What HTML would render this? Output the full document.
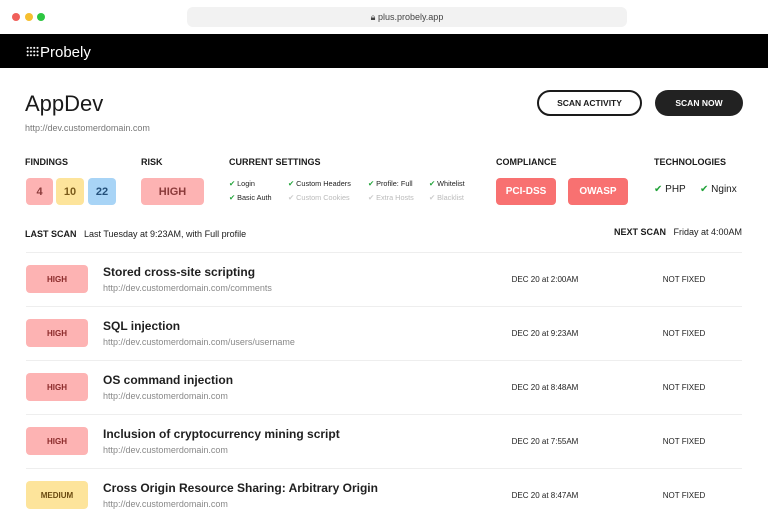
<!DOCTYPE html><html><head><style>
*{margin:0;padding:0;box-sizing:border-box}
body{width:768px;height:522px;overflow:hidden;background:#fff;font-family:"Liberation Sans",sans-serif;color:#1a1a1a;position:relative}
.a{position:absolute}
.dot{width:8px;height:8px;border-radius:50%;top:13px}
.lbl{font-size:9px;font-weight:bold;top:157px}
.bd{border-radius:4px;display:flex;align-items:center;justify-content:center;font-weight:bold}
.set{font-size:7.3px;color:#222;white-space:nowrap}
.set.off{color:#bbb}
.ck{color:#22a33a;margin-right:2px}
.off .ck{color:#ccc}
.sep{left:26px;width:716px;height:1px;background:#eee}
.hb{left:26px;width:62px;height:28px;background:#fdb3b3;color:#8a2a2a;font-size:8px}
.t{left:103px;font-size:12px;font-weight:bold;color:#1f1f1f}
.u{left:103px;font-size:9px;color:#888}
.d{left:480px;width:130px;text-align:center;font-size:8px;color:#222}
.s{left:630px;width:108px;text-align:center;font-size:8px;color:#222}
</style></head><body>
<div class="a dot" style="left:12px;background:#f0605a"></div>
<div class="a dot" style="left:25px;background:#f6bf2f"></div>
<div class="a dot" style="left:37px;background:#2dc641"></div>
<div class="a" style="left:187px;top:7px;width:440px;height:20px;background:#f2f2f2;border-radius:6px;font-size:9px;color:#444;text-align:center;line-height:20px">🔒︎ plus.probely.app</div>
<div class="a" style="left:0;top:34px;width:768px;height:34px;background:#000"></div>
<div class="a" style="left:26px;top:46px;width:13px;height:11px;background:radial-gradient(circle,#fff 0.9px,transparent 1.1px) 0 0/3.3px 3.7px"></div>
<div class="a" style="left:40px;top:44px;font-size:15px;color:#fff">Probely</div>
<div class="a" style="left:25px;top:91px;font-size:22px;color:#1a1a1a">AppDev</div>
<div class="a" style="left:25px;top:123px;font-size:9px;color:#777">http://dev.customerdomain.com</div>
<div class="a" style="left:537px;top:90px;width:105px;height:26px;border:2px solid #1a1a1a;border-radius:13px;font-size:8.5px;font-weight:bold;text-align:center;line-height:22px">SCAN ACTIVITY</div>
<div class="a" style="left:655px;top:90px;width:88px;height:26px;background:#222;color:#fff;border-radius:13px;font-size:8.5px;font-weight:bold;text-align:center;line-height:26px">SCAN NOW</div>
<div class="a lbl" style="left:25px">FINDINGS</div>
<div class="a lbl" style="left:141px">RISK</div>
<div class="a lbl" style="left:229px">CURRENT SETTINGS</div>
<div class="a lbl" style="left:496px">COMPLIANCE</div>
<div class="a lbl" style="left:654px">TECHNOLOGIES</div>
<div class="a bd" style="left:26px;top:178px;width:27px;height:27px;background:#fdb3b3;color:#8a3a3a;font-size:11px">4</div>
<div class="a bd" style="left:56px;top:178px;width:28px;height:27px;background:#fde49b;color:#7a5a1a;font-size:11px">10</div>
<div class="a bd" style="left:88px;top:178px;width:28px;height:27px;background:#a8d4f6;color:#24507a;font-size:11px">22</div>
<div class="a bd" style="left:141px;top:178px;width:63px;height:27px;background:#fdb3b3;color:#8a3a3a;font-size:11px">HIGH</div>
<div class="a set" style="left:229px;top:179px"><span class="ck">✔</span>Login</div>
<div class="a set" style="left:229px;top:193px"><span class="ck">✔</span>Basic Auth</div>
<div class="a set" style="left:288px;top:179px"><span class="ck">✔</span>Custom Headers</div>
<div class="a set off" style="left:288px;top:193px"><span class="ck">✔</span>Custom Cookies</div>
<div class="a set" style="left:368px;top:179px"><span class="ck">✔</span>Profile: Full</div>
<div class="a set off" style="left:368px;top:193px"><span class="ck">✔</span>Extra Hosts</div>
<div class="a set" style="left:429px;top:179px"><span class="ck">✔</span>Whitelist</div>
<div class="a set off" style="left:429px;top:193px"><span class="ck">✔</span>Blacklist</div>
<div class="a bd" style="left:496px;top:178px;width:60px;height:27px;background:#f87171;color:#fff;font-size:10px">PCI-DSS</div>
<div class="a bd" style="left:568px;top:178px;width:60px;height:27px;background:#f87171;color:#fff;font-size:10px">OWASP</div>
<div class="a" style="left:654px;top:184px;font-size:10px"><span style="color:#22a33a">✔</span> PHP</div>
<div class="a" style="left:700px;top:184px;font-size:10px"><span style="color:#22a33a">✔</span> Nginx</div>
<div class="a" style="left:25px;top:229px;font-size:9px"><b>LAST SCAN</b>&nbsp;&nbsp; Last Tuesday at 9:23AM, with Full profile</div>
<div class="a" style="right:26px;top:227px;font-size:9px"><b>NEXT SCAN</b>&nbsp;&nbsp; Friday at 4:00AM</div>

<div class="a sep" style="top:252px"></div>
<div class="a bd hb" style="top:265px">HIGH</div>
<div class="a t" style="top:265px">Stored cross-site scripting</div>
<div class="a u" style="top:283px">http://dev.customerdomain.com/comments</div>
<div class="a d" style="top:275px">DEC 20 at 2:00AM</div><div class="a s" style="top:275px">NOT FIXED</div>

<div class="a sep" style="top:306px"></div>
<div class="a bd hb" style="top:319px">HIGH</div>
<div class="a t" style="top:319px">SQL injection</div>
<div class="a u" style="top:337px">http://dev.customerdomain.com/users/username</div>
<div class="a d" style="top:329px">DEC 20 at 9:23AM</div><div class="a s" style="top:329px">NOT FIXED</div>

<div class="a sep" style="top:360px"></div>
<div class="a bd hb" style="top:373px">HIGH</div>
<div class="a t" style="top:373px">OS command injection</div>
<div class="a u" style="top:391px">http://dev.customerdomain.com</div>
<div class="a d" style="top:383px">DEC 20 at 8:48AM</div><div class="a s" style="top:383px">NOT FIXED</div>

<div class="a sep" style="top:414px"></div>
<div class="a bd hb" style="top:427px">HIGH</div>
<div class="a t" style="top:427px">Inclusion of cryptocurrency mining script</div>
<div class="a u" style="top:445px">http://dev.customerdomain.com</div>
<div class="a d" style="top:437px">DEC 20 at 7:55AM</div><div class="a s" style="top:437px">NOT FIXED</div>

<div class="a sep" style="top:468px"></div>
<div class="a bd hb" style="top:481px;background:#fde49b;color:#6a4a10">MEDIUM</div>
<div class="a t" style="top:481px">Cross Origin Resource Sharing: Arbitrary Origin</div>
<div class="a u" style="top:499px">http://dev.customerdomain.com</div>
<div class="a d" style="top:491px">DEC 20 at 8:47AM</div><div class="a s" style="top:491px">NOT FIXED</div>
</body></html>
